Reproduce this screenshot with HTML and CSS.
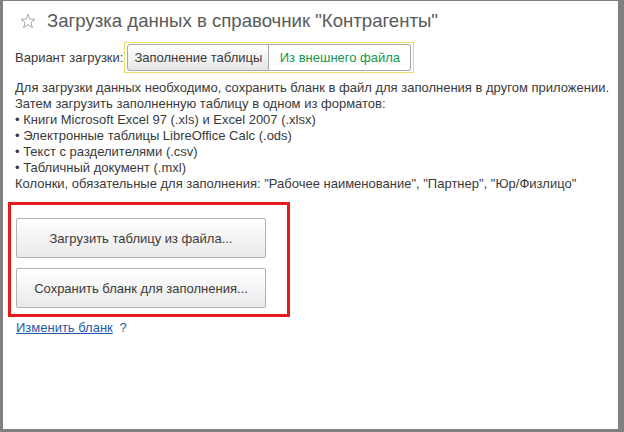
FILE: index.html
```html
<!DOCTYPE html>
<html>
  <head>
    <title>Загрузка данных</title>
    <link rel="stylesheet" href="styles.css">
  </head>
  <body>
    <div class="window">
      <div class="title">
        <svg class="star" width="16" height="16" viewBox="0 0 16 16">
          <path d="M8 1.2 L9.9 6 L15 6.3 L11 9.5 L12.4 14.6 L8 11.7 L3.6 14.6 L5 9.5 L1 6.3 L6.1 6 Z" fill="none" stroke="#a8a8a8" stroke-width="1"/>
        </svg>
        <span>Загрузка данных в справочник "Контрагенты"</span>
      </div>

      <div class="variant-row">
        <span class="label">Вариант загрузки:</span>
        <div class="toggle">
          <button class="toggle-btn active">Заполнение таблицы</button>
          <button class="toggle-btn green">Из внешнего файла</button>
        </div>
      </div>

      <div class="info">
        Для загрузки данных необходимо, сохранить бланк в файл для заполнения в другом приложении.<br>
        Затем загрузить заполненную таблицу в одном из форматов:<br>
        • Книги Microsoft Excel 97 (.xls) и Excel 2007 (.xlsx)<br>
        • Электронные таблицы LibreOffice Calc (.ods)<br>
        • Текст с разделителями (.csv)<br>
        • Табличный документ (.mxl)<br>
        Колонки, обязательные для заполнения: "Рабочее наименование", "Партнер", "Юр/Физлицо"
      </div>

      <div class="highlight">
        <button class="big-btn">Загрузить таблицу из файла...</button>
        <button class="big-btn">Сохранить бланк для заполнения...</button>
      </div>

      <div class="links">
        <a href="#" class="link">Изменить бланк</a>
        <span class="help">?</span>
      </div>
    </div>
  </body>
</html>
```

FILE: styles.css
```css
html, body {
  margin: 0;
  padding: 0;
  background-color: #fff;
}
body {
  font-family: "Liberation Sans", Arial, sans-serif;
  color: #3a3a3a;
}
.window {
  box-sizing: border-box;
  width: 624px;
  height: 432px;
  border-top: 1px solid #808080;
  border-left: 3px solid #808080;
  border-right: 6px solid #808080;
  border-bottom: 3px solid #808080;
  padding: 0 0 0 5px;
}
.title {
  display: flex;
  align-items: center;
  height: 35px;
  padding-top: 2px;
  padding-left: 12px;
  font-size: 18.6px;
  color: #595959;
}
.star {
  margin-right: 11px;
}
.variant-row {
  display: flex;
  align-items: center;
  height: 31px;
  margin-top: 4px;
  padding-left: 7px;
  font-size: 13px;
}
.label {
  margin-right: 1px;
  white-space: nowrap;
}
.toggle {
  display: flex;
  border: 1px solid #eadb6a;
  padding: 1px 2px;
}
.toggle-btn {
  box-sizing: border-box;
  font-family: inherit;
  font-size: 13px;
  white-space: nowrap;
  height: 27px;
  width: 142px;
  padding: 0;
  border: 1px solid #a7a7a7;
  background: #fff;
  color: #3a3a3a;
  cursor: pointer;
}
.toggle-btn.active {
  border-radius: 3px 0 0 3px;
  background: linear-gradient(#ffffff, #e6e6e6);
}
.toggle-btn.green {
  border-left: none;
  border-radius: 0 3px 3px 0;
  color: #13964a;
}
.info {
  margin-top: 7px;
  padding-left: 7px;
  font-size: 13px;
  line-height: 16px;
}
.highlight {
  box-sizing: border-box;
  display: flex;
  flex-direction: column;
  gap: 10px;
  width: 282px;
  margin-top: 10px;
  border: 3px solid #e41b1b;
  padding: 13px 21px 6px 5px;
}
.big-btn {
  font-family: inherit;
  font-size: 13px;
  color: #3a3a3a;
  height: 40px;
  border: 1px solid #b3b3b3;
  border-radius: 2px;
  background: linear-gradient(#ffffff, #e9e9e9);
  cursor: pointer;
}
.links {
  margin-top: 3px;
  padding-left: 8px;
  font-size: 13px;
  line-height: 16px;
}
.link {
  color: #1c5aa8;
  text-decoration: underline;
}
.help {
  margin-left: 3px;
  color: #1c5aa8;
}
```
